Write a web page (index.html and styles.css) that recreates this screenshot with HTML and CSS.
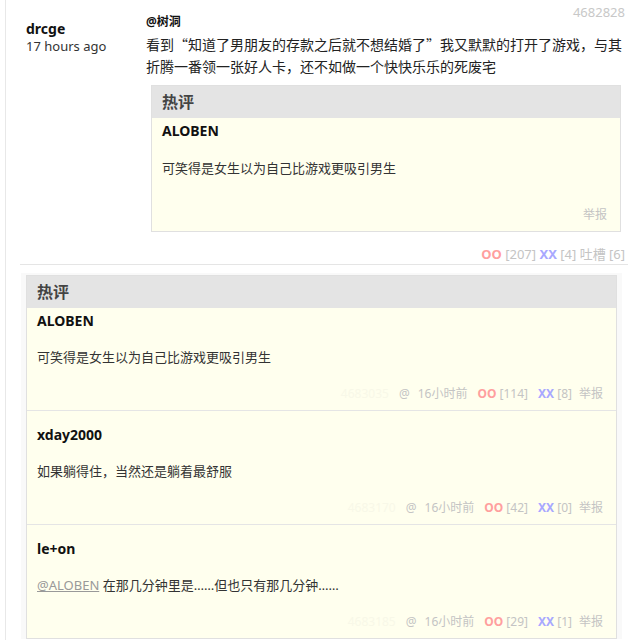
FILE: index.html
```html
<!DOCTYPE html>
<html lang="zh-CN">
<head>
<meta charset="utf-8">
<title>吐槽</title>
<link rel="stylesheet" href="styles.css">
</head>
<body>
<div class="page">
  <div class="comment">
    <div class="author">
      <div class="author-name">drcge</div>
      <div class="author-time">17 hours ago</div>
    </div>
    <div class="content">
      <div class="content-top">
        <span class="mention">@树洞</span>
        <span class="comment-id">4682828</span>
      </div>
      <p class="content-text">看到“知道了男朋友的存款之后就不想结婚了”我又默默的打开了游戏，与其折腾一番领一张好人卡，还不如做一个快快乐乐的死废宅</p>
      <div class="hot nested">
        <div class="hot-head">热评</div>
        <div class="hot-body">
          <div class="item first">
            <div class="item-name">ALOBEN</div>
            <p class="item-text nested-text">可笑得是女生以为自己比游戏更吸引男生</p>
            <div class="item-foot nested-foot"><span class="report">举报</span></div>
          </div>
        </div>
      </div>
      <div class="votes"><span class="oo">OO</span> [207] <span class="xx">XX</span> [4] 吐槽 [6]</div>
    </div>
  </div>

  <div class="hot-wrap">
    <div class="hot">
      <div class="hot-head">热评</div>
      <div class="hot-body">
        <div class="item first">
          <div class="item-name">ALOBEN</div>
          <p class="item-text">可笑得是女生以为自己比游戏更吸引男生</p>
          <div class="item-foot"><span class="fid">4683035</span><span class="at">@</span><span class="time">16小时前</span><span class="oo">OO</span> [114]<span class="xx">XX</span> [8]<span class="report">举报</span></div>
        </div>
        <div class="item">
          <div class="item-name">xday2000</div>
          <p class="item-text">如果躺得住，当然还是躺着最舒服</p>
          <div class="item-foot"><span class="fid">4683170</span><span class="at">@</span><span class="time">16小时前</span><span class="oo">OO</span> [42]<span class="xx">XX</span> [0]<span class="report">举报</span></div>
        </div>
        <div class="item">
          <div class="item-name">le+on</div>
          <p class="item-text"><a class="reply" href="#">@ALOBEN</a> 在那几分钟里是……但也只有那几分钟……</p>
          <div class="item-foot"><span class="fid">4683185</span><span class="at">@</span><span class="time">16小时前</span><span class="oo">OO</span> [29]<span class="xx">XX</span> [1]<span class="report">举报</span></div>
        </div>
      </div>
    </div>
  </div>
</div>
</body>
</html>
```

FILE: styles.css
```css
* { box-sizing: border-box; }

html, body {
  margin: 0;
  padding: 0;
  background: #fff;
}

body {
  font-family: "Noto Sans", "Noto Sans CJK SC", sans-serif;
  color: #222;
  font-size: 13px;
}

.page {
  margin-left: 5px;
  border-left: 1px solid #e8e8e8;
  min-height: 640px;
  overflow: hidden;
}

.comment {
  margin-left: 14px;
  display: flex;
  border-bottom: 1px solid #e5e5e5;
  padding-right: 3px;
}

.author {
  width: 126px;
  flex: none;
  padding-left: 6px;
  padding-top: 20px;
}

.author-name {
  font-weight: 700;
  font-size: 14px;
  line-height: 18px;
  color: #111;
}

.author-time {
  font-size: 13px;
  line-height: 16px;
  color: #333;
}

.content {
  flex: 1;
  min-width: 0;
  padding-top: 4px;
}

.content-top {
  display: flex;
  justify-content: space-between;
  align-items: flex-start;
}

.mention {
  font-weight: 700;
  font-size: 12px;
  line-height: 18px;
  margin-top: 9px;
  color: #111;
}

.comment-id {
  font-size: 13px;
  line-height: 16px;
  color: #c8c8c8;
}

.content-text {
  margin: 2px 0 0;
  font-family: "Noto Sans CJK SC", "Noto Sans", sans-serif;
  font-size: 14px;
  line-height: 22px;
  color: #222;
}

.hot {
  border: 1px solid #e0e0e0;
  background: #ffffee;
}

.hot.nested {
  margin: 8px 4px 0 5px;
}

.hot-head {
  background: #e4e4e4;
  height: 32px;
  line-height: 32px;
  padding-left: 10px;
  font-size: 16px;
  font-weight: 700;
  color: #444;
}

.item {
  padding: 13px 13px 6px 10px;
  border-top: 1px solid #e5e5e5;
}

.item.first {
  border-top: 0;
  padding-top: 2px;
}

.item-name {
  font-weight: 700;
  font-size: 14px;
  line-height: 22px;
  color: #111;
}

.item-text {
  margin: 14px 0 0;
  font-size: 13px;
  line-height: 22px;
  color: #333;
}

.nested-text {
  margin-top: 15px;
}

.item-foot {
  margin-top: 16px;
  text-align: right;
  font-size: 12px;
  line-height: 20px;
  color: #c4c4c4;
  white-space: nowrap;
}

.nested-foot {
  margin-top: 26px;
}

.fid { color: #f8f8e8; }
.at { margin-left: 10px; }
.time { margin-left: 8px; }
.item-foot .oo { margin-left: 10px; }
.item-foot .xx { margin-left: 10px; }
.item-foot .report { margin-left: 7px; }

.oo {
  color: #ff9f9f;
  font-weight: 700;
}

.xx {
  color: #a8a8ff;
  font-weight: 700;
}

.votes {
  margin-top: 12px;
  text-align: right;
  font-size: 13px;
  line-height: 20px;
  color: #c4c4c4;
}

.reply {
  color: #999;
  text-decoration: underline;
}

.hot-wrap {
  margin: 8px 6px 0 15px;
  padding: 2px 5px 0 5px;
  background: #f9f9f9;
}
```
